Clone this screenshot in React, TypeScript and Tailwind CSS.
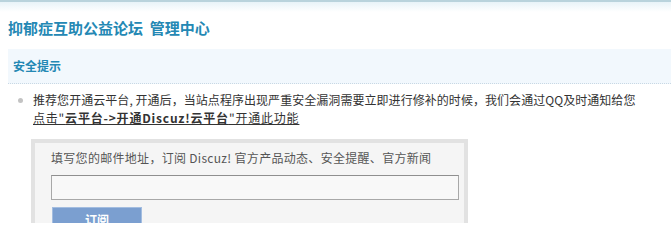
import React from "react";

export default function App() {
  const cjk = { fontFamily: '"Noto Sans CJK SC", "Liberation Sans", sans-serif' };
  return (
    <div className="w-[671px] h-[223px] overflow-hidden bg-white text-[12px] text-[#333]" style={cjk}>
      <div className="h-[12px] border-t-2 border-[#b9d3dc] bg-gradient-to-b from-[#e8f3f8] to-white" />
      <div className="pl-[8px] pt-[6px] h-[37px]">
        <h1 className="text-[15px] leading-[20px] font-bold text-[#2488b4]">抑郁症互助公益论坛&nbsp;&nbsp;管理中心</h1>
      </div>
      <div className="ml-[8px] h-[35px] bg-[#f2f8fd] border-b border-dotted border-[#c8d8e4] flex items-center pl-[5px]">
        <span className="text-[12px] font-bold text-[#2488b4]">安全提示</span>
      </div>
      <div className="flex pl-[18px] pt-[7px]">
        <div className="w-[15px] pt-[7px]">
          <div className="w-[5px] h-[5px] rounded-full bg-[#c3c3c3]" />
        </div>
        <div className="leading-[18px]">
          <div className="tracking-[0.05px]">推荐您开通云平台, 开通后，当站点程序出现严重安全漏洞需要立即进行修补的时候，我们会通过QQ及时通知给您</div>
          <a className="underline text-[#333] tracking-[0.8px]" href="#">
            点击"<b>云平台-&gt;开通Discuz!云平台</b>"开通此功能
          </a>
        </div>
      </div>
      <div className="ml-[31px] mt-[12px] w-[437px] border-4 border-[#e2e2e2] bg-[#f5f5f5] pl-[16px] pr-[5px] pt-[5px] pb-[10px]">
        <div className="leading-[20px] text-[#555] tracking-[0.3px]">填写您的邮件地址，订阅 Discuz! 官方产品动态、安全提醒、官方新闻</div>
        <div className="mt-[7px] w-[408px] h-[25px] border border-[#a8a8a8] border-t-[#8f8f8f] bg-[#f8f8f8]" />
        <button className="mt-[7px] ml-[1px] w-[90px] h-[26px] bg-[#7b9fd0] border border-[#a3bde0] text-white font-bold text-[12px]">订阅</button>
      </div>
    </div>
  );
}
